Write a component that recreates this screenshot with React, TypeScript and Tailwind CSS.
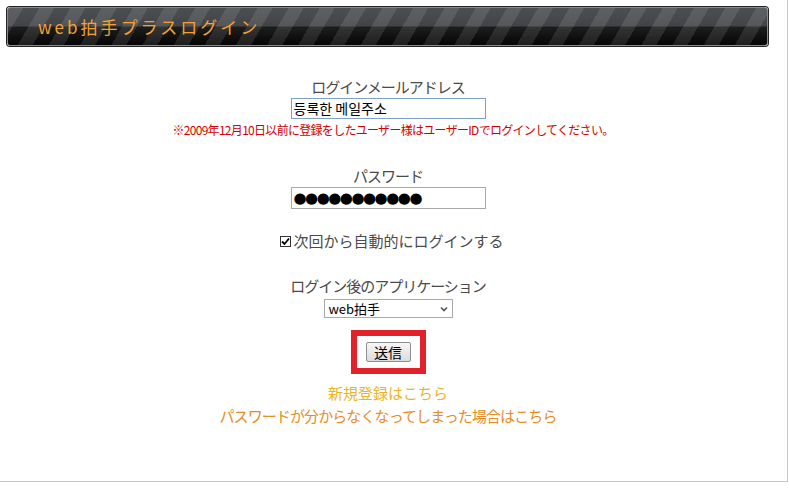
import React from "react";

const jp = { fontFamily: '"Noto Sans CJK JP", "Noto Sans", sans-serif' };

export default function App() {
  return (
    <div className="w-[788px] h-[482px] border-r border-b border-[#c8c8c8] bg-white" style={jp}>
      <div className="pt-[7px] pl-[7px]">
        <div className="w-[761px] h-[39px] rounded-[3px] border border-[#8a8a8a] shadow-[0_0_0_1px_#222] flex items-center pl-[30px] [background-image:repeating-linear-gradient(120deg,rgba(255,255,255,0.1)_0px,rgba(255,255,255,0.1)_13px,rgba(0,0,0,0)_13px,rgba(0,0,0,0)_27px),linear-gradient(to_bottom,#4d4e51_0%,#434447_48%,#1d1d1e_52%,#050505_100%)]">
          <span className="text-[17px] leading-none tracking-[3px] text-[#f2a232]">web拍手プラスログイン</span>
        </div>
      </div>

      <div className="w-[776px] flex flex-col items-center">
        <div className="mt-[31px] h-[20px] leading-[20px] text-[15px] tracking-[-1px] text-[#4a4a4a]">ログインメールアドレス</div>
        <input
          readOnly
          defaultValue="등록한 메일주소"
          className="mt-[1px] w-[195px] h-[21px] border border-[#7da2c5] px-[2px] text-[14px] text-black outline-none"
          style={{ fontFamily: '"Noto Sans CJK KR", "Noto Sans CJK JP", sans-serif' }}
        />
        <div className="mt-[3px] pl-[10px] h-[16px] leading-[16px] text-[12px] tracking-[-0.7px] text-[#d40000] whitespace-nowrap">
          ※2009年12月10日以前に登録をしたユーザー様はユーザーIDでログインしてください。
        </div>
        <div className="mt-[28px] h-[20px] leading-[20px] text-[15px] tracking-[-1px] text-[#4a4a4a]">パスワード</div>
        <div className="mt-[1px] w-[195px] h-[22px] border border-[#a9a9a9] pl-[2px] flex items-center text-[15px] leading-none text-black tracking-[-1.5px]" style={{ fontFamily: '"DejaVu Sans", sans-serif' }}>
          ●●●●●●●●●●●
        </div>
        <div className="mt-[22px] ml-[8px] h-[20px] flex items-center">
          <div className="w-[11px] h-[11px] border border-[#333] bg-white flex items-center justify-center mr-[2px]">
            <svg width="9" height="9" viewBox="0 0 9 9">
              <path d="M1 4.5 L3.5 7 L8 1.5" fill="none" stroke="#000" strokeWidth="1.8" />
            </svg>
          </div>
          <span className="text-[15px] leading-[20px] text-[#4a4a4a]">次回から自動的にログインする</span>
        </div>
        <div className="mt-[25px] h-[20px] leading-[20px] text-[15px] tracking-[-1px] text-[#4a4a4a]">ログイン後のアプリケーション</div>
        <div className="mt-[3px] w-[129px] h-[19px] border border-[#a9a9a9] flex items-center justify-between pl-[4px] pr-[4px]">
          <span className="text-[13px] leading-none text-black">web拍手</span>
          <svg width="8" height="6" viewBox="0 0 8 6">
            <path d="M1 1.5 L4 4.5 L7 1.5" fill="none" stroke="#555" strokeWidth="1.6" />
          </svg>
        </div>
        <div className="mt-[12px] w-[75px] h-[44px] border-[6px] border-[#e3212b] flex items-center justify-center">
          <div className="w-[45px] h-[20px] border border-[#8f8f8f] rounded-[2px] bg-gradient-to-b from-[#f7f7f7] to-[#dcdcdc] flex items-center justify-center text-[14px] leading-none text-black">
            送信
          </div>
        </div>
        <div className="mt-[9px] h-[20px] leading-[20px] text-[15px] text-[#eab424]">新規登録はこちら</div>
        <div className="mt-[3px] h-[20px] leading-[20px] text-[15px] tracking-[-0.9px] text-[#e88c24]">パスワードが分からなくなってしまった場合はこちら</div>
      </div>
    </div>
  );
}
